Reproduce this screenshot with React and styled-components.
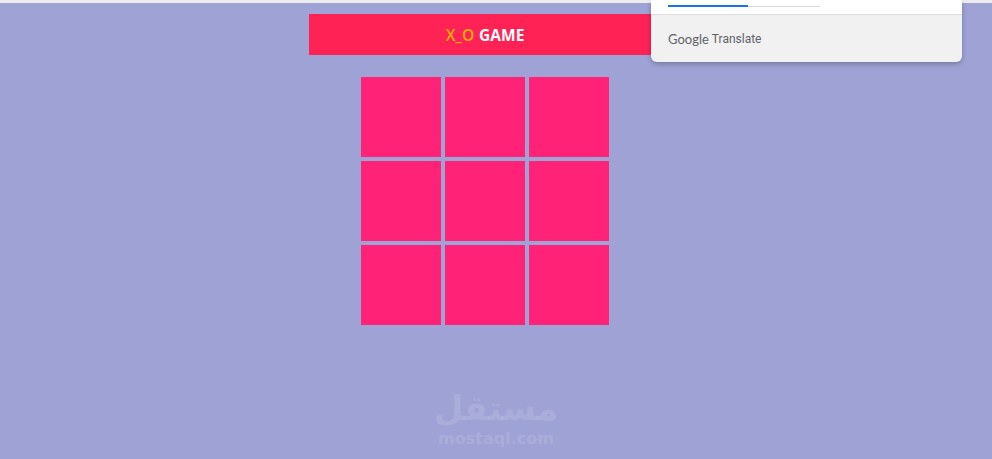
import React from 'react';
import styled, { createGlobalStyle } from 'styled-components';

const GlobalStyle = createGlobalStyle`
  html, body {
    margin: 0;
    padding: 0;
    height: 100%;
  }
  body {
    background: #9ea2d4;
    font-family: "Open Sans", "Noto Sans", sans-serif;
    overflow: hidden;
  }
`;

const Page = styled.div`
  position: relative;
  height: 459px;
  border-top: 3px solid #ececec;
  box-sizing: border-box;
`;

const Main = styled.main`
  width: 350px;
  margin-left: 309px;
  padding-top: 11px;
  display: flex;
  flex-direction: column;
  align-items: center;
`;

const Header = styled.h1`
  width: 100%;
  height: 41px;
  margin: 0;
  background: #ff2255;
  display: flex;
  align-items: center;
  justify-content: center;
  padding-left: 2px;
  box-sizing: border-box;
  font-size: 15.5px;
  font-weight: 700;
  color: #fff;
  gap: 5px;
`;

const Accent = styled.span`
  color: #ffb000;
  font-weight: 600;
`;

const Board = styled.div`
  margin-top: 22px;
  margin-left: 2px;
  display: grid;
  grid-template-columns: repeat(3, 80px);
  grid-auto-rows: 80px;
  gap: 4px;
`;

const Cell = styled.div`
  background: #ff2277;
  cursor: pointer;
`;

const Popup = styled.div`
  position: absolute;
  top: -3px;
  left: 651px;
  width: 311px;
  height: 62px;
  border-radius: 0 0 6px 6px;
  box-shadow: 0 2px 5px rgba(0, 0, 0, 0.25);
  overflow: hidden;
  display: flex;
  flex-direction: column;
`;

const PopupTop = styled.div`
  height: 14px;
  background: #fff;
  border-bottom: 1px solid #dcdcdc;
  padding: 0 17px;
  display: flex;
  align-items: flex-start;
`;

const Track = styled.div`
  margin-top: 6px;
  width: 152px;
  height: 1px;
  background: #d6d6d6;
`;

const Progress = styled.div`
  height: 2px;
  margin-top: -1px;
  background: #1a73e8;
`;

const PopupFoot = styled.div`
  flex: 1;
  background: #f1f1f1;
  padding: 1px 17px 0;
  display: flex;
  align-items: center;
  font-size: 12px;
  color: #5f6368;
  font-family: "Roboto", "Noto Sans", sans-serif;
  gap: 3px;
`;

const Brand = styled.span`
  font-family: "Lato", "Roboto", sans-serif;
  font-size: 13px;
  color: #5f6368;
`;

const Watermark = styled.div`
  position: absolute;
  left: 436px;
  top: 386px;
  width: 120px;
  display: flex;
  flex-direction: column;
  align-items: center;
  color: rgba(255, 255, 255, 0.15);
  font-family: "DejaVu Sans", sans-serif;
  font-weight: 700;
`;

const ArabicLogo = styled.div`
  font-size: 34px;
  line-height: 38px;
  height: 40px;
  direction: rtl;
`;

const Domain = styled.div`
  font-size: 16px;
  line-height: 20px;
`;

export default function App() {
  return (
    <>
      <GlobalStyle />
      <Page>
        <Main>
          <Header>
            <Accent>X_O</Accent> GAME
          </Header>
          <Board>
            {Array.from({ length: 9 }).map((_, i) => (
              <Cell key={i} />
            ))}
          </Board>
        </Main>
        <Popup>
          <PopupTop>
            <Track>
              <Progress style={{ width: `${(80 / 152) * 100}%` }} />
            </Track>
          </PopupTop>
          <PopupFoot>
            <Brand>Google</Brand> Translate
          </PopupFoot>
        </Popup>
        <Watermark>
          <ArabicLogo>مستقل</ArabicLogo>
          <Domain>mostaql.com</Domain>
        </Watermark>
      </Page>
    </>
  );
}
